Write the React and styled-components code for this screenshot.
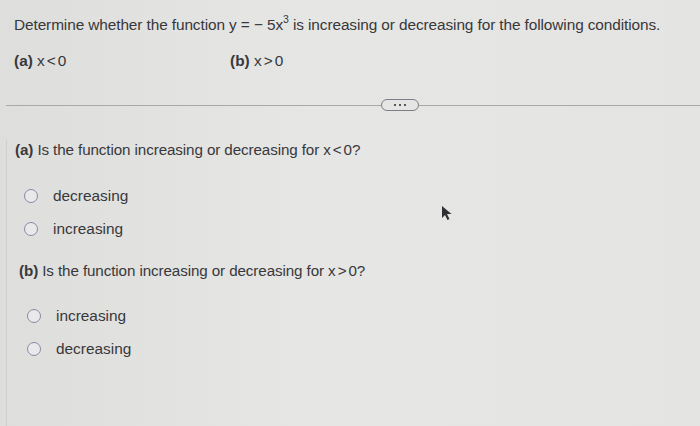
import styled, { createGlobalStyle } from "styled-components";

const Global = createGlobalStyle`
  html, body {
    margin: 0;
    padding: 0;
    background: #e3e3e1;
  }
  body {
    font-family: "Liberation Sans", Arial, sans-serif;
    color: #38383b;
  }
`;

const Page = styled.div`
  width: 700px;
  height: 426px;
  overflow: hidden;
  position: relative;
  background: linear-gradient(90deg, #dededc 0%, #e6e6e4 45%, #e4e4e2 100%);
`;

const Header = styled.div`
  padding: 15px 0 0 14px;
`;

const Title = styled.div`
  font-size: 15.4px;
  line-height: 20px;
  letter-spacing: -0.1px;
  sup {
    font-size: 10.5px;
    vertical-align: 7px;
    line-height: 0;
  }
`;

const Conditions = styled.div`
  display: flex;
  margin-top: 16px;
  font-size: 15.4px;
  line-height: 20px;
`;

const Cond = styled.div`
  width: ${(p) => p.w}px;
  b {
    font-weight: 700;
  }
`;

const Divider = styled.div`
  margin: 28px 0 0 6px;
  display: flex;
  align-items: center;
  &::before,
  &::after {
    content: "";
    height: 1px;
    background: #a9a9ab;
  }
  &::before {
    width: 375px;
  }
  &::after {
    flex: 1;
  }
`;

const MoreButton = styled.div`
  width: 36px;
  height: 10px;
  border: 1.5px solid #7d7f86;
  border-radius: 6px;
  display: flex;
  align-items: center;
  justify-content: center;
  gap: 3px;
  span {
    width: 2px;
    height: 2px;
    background: #55575e;
  }
`;

const Body = styled.div`
  border-left: 1px solid #cfcfd0;
  margin-left: 6px;
  padding-bottom: 80px;
`;

const Question = styled.div`
  font-size: 15.2px;
  line-height: 20px;
  letter-spacing: -0.1px;
  padding-left: ${(p) => p.indent}px;
  margin-top: ${(p) => p.top}px;
  b {
    font-weight: 700;
  }
`;

const Options = styled.div`
  display: flex;
  flex-direction: column;
  gap: 13px;
  margin-top: ${(p) => p.top}px;
  padding-left: ${(p) => p.indent}px;
`;

const Option = styled.label`
  display: flex;
  align-items: center;
  font-size: 15.4px;
  line-height: 20px;
  height: 20px;
`;

const Radio = styled.span`
  width: 12px;
  height: 12px;
  border-radius: 50%;
  border: 1.6px solid #858ba6;
  background: #e9e9eb;
  margin-right: 15px;
  flex-shrink: 0;
`;

const Cursor = styled.svg`
  position: absolute;
  left: 441px;
  top: 205px;
`;

const Lt = () => <span style={{ margin: "0 2px" }}>&lt;</span>;
const Gt = () => <span style={{ margin: "0 2px" }}>&gt;</span>;

export default function App() {
  return (
    <>
      <Global />
      <Page>
        <Header>
          <Title>
            Determine whether the function y = &minus; 5x<sup>3</sup> is increasing or
            decreasing for the following conditions.
          </Title>
          <Conditions>
            <Cond w={216}>
              <b>(a)</b> x<Lt />0
            </Cond>
            <Cond w={100}>
              <b>(b)</b> x<Gt />0
            </Cond>
          </Conditions>
        </Header>
        <Divider>
          <MoreButton>
            <span />
            <span />
            <span />
          </MoreButton>
        </Divider>
        <Body>
          <Question indent={8} top={29}>
            <b>(a)</b> Is the function increasing or decreasing for x<Lt />0?
          </Question>
          <Options indent={17} top={26}>
            <Option>
              <Radio />
              decreasing
            </Option>
            <Option>
              <Radio />
              increasing
            </Option>
          </Options>
          <Question indent={12} top={22}>
            <b>(b)</b> Is the function increasing or decreasing for x<Gt />0?
          </Question>
          <Options indent={20} top={25}>
            <Option>
              <Radio />
              increasing
            </Option>
            <Option>
              <Radio />
              decreasing
            </Option>
          </Options>
        </Body>
        <Cursor width="12" height="16" viewBox="0 0 12 16">
          <path d="M1 1 L1 13 L4 10 L6.5 15 L8.5 14 L6 9 L10.5 9 Z" fill="#2e3034" />
        </Cursor>
      </Page>
    </>
  );
}
